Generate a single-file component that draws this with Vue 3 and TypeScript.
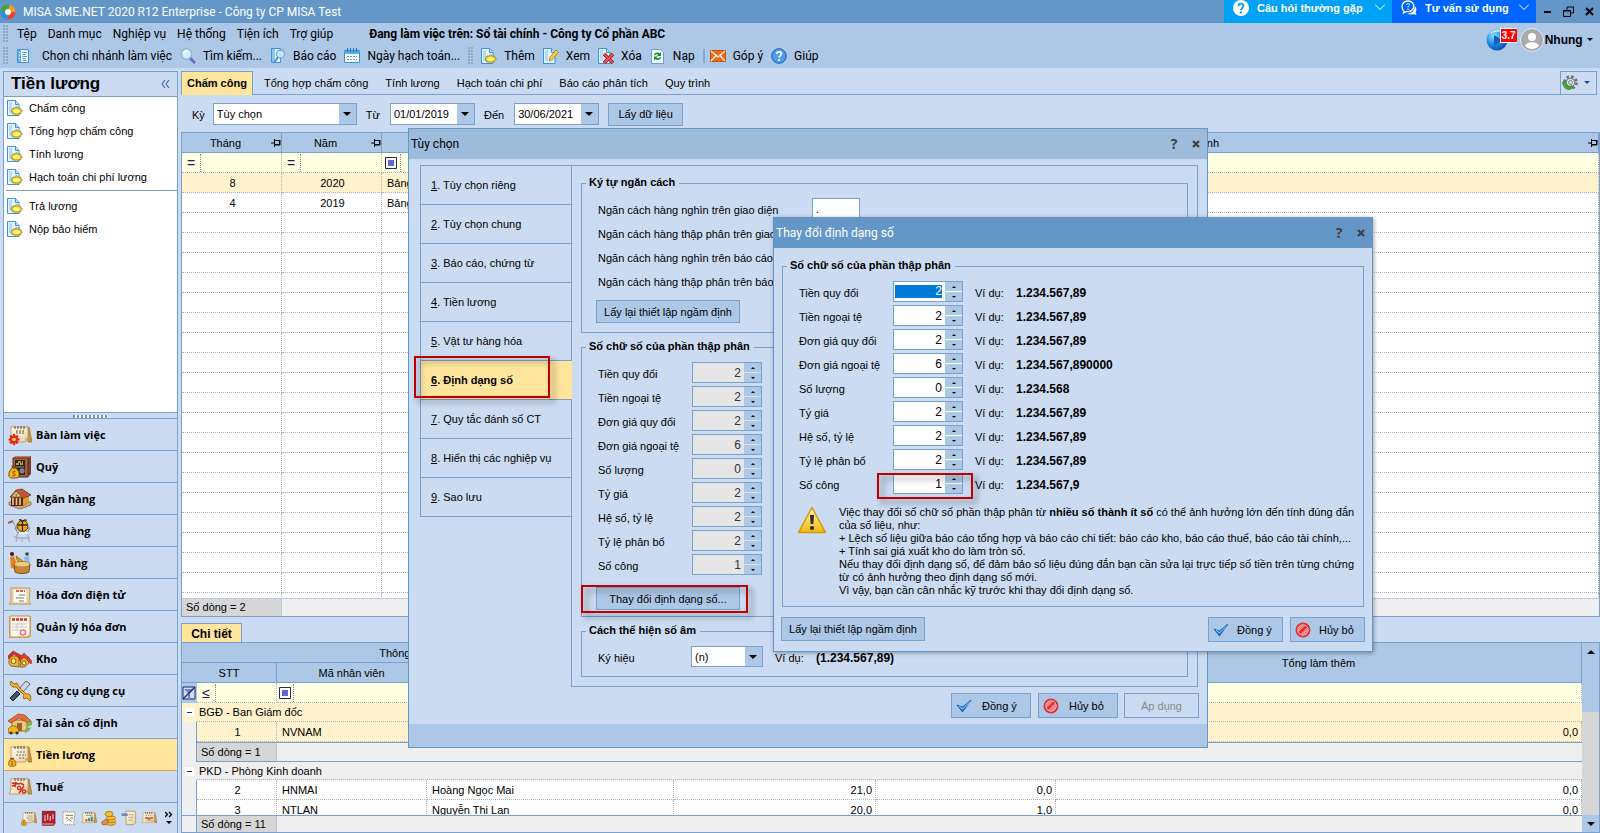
<script setup lang="ts">
import { ref } from 'vue'

interface Tool { icon: string; label: string }
interface NumberFormat { id: string; label: string; digits: number; sample: string }

const menus = ['Tệp', 'Danh mục', 'Nghiệp vụ', 'Hệ thống', 'Tiện ích', 'Trợ giúp']
const mainTools: Tool[] = [
  { icon: 'branch', label: 'Chọn chi nhánh làm việc' },
  { icon: 'search', label: 'Tìm kiếm...' },
  { icon: 'report', label: 'Báo cáo' },
  { icon: 'calendar', label: 'Ngày hạch toán...' },
]
const editTools: Tool[] = [
  { icon: 'docnew', label: 'Thêm' },
  { icon: 'docedit', label: 'Xem' },
  { icon: 'docdel', label: 'Xóa' },
  { icon: 'refresh', label: 'Nạp' },
]
const helpTools: Tool[] = [
  { icon: 'mail', label: 'Góp ý' },
  { icon: 'help', label: 'Giúp' },
]
const payrollLinks = ['Chấm công', 'Tổng hợp chấm công', 'Tính lương', 'Hạch toán chi phí lương']
const paymentLinks = ['Trả lương', 'Nộp bảo hiểm']
const modules: Tool[] = [
  { icon: 'desk', label: 'Bàn làm việc' },
  { icon: 'cash', label: 'Quỹ' },
  { icon: 'bank', label: 'Ngân hàng' },
  { icon: 'buy', label: 'Mua hàng' },
  { icon: 'sell', label: 'Bán hàng' },
  { icon: 'einvoice', label: 'Hóa đơn điện tử' },
  { icon: 'invoice', label: 'Quản lý hóa đơn' },
  { icon: 'stock', label: 'Kho' },
  { icon: 'tools', label: 'Công cụ dụng cụ' },
  { icon: 'asset', label: 'Tài sản cố định' },
  { icon: 'salary', label: 'Tiền lương' },
  { icon: 'tax', label: 'Thuế' },
]
const activeModule = ref('Tiền lương')
const moreModules: Tool[] = [
  { icon: 'salary', label: 'Giá thành' },
  { icon: 'redbook', label: 'Sổ cái' },
  { icon: 'contract', label: 'Hợp đồng' },
  { icon: 'budget', label: 'Ngân sách' },
  { icon: 'coins', label: 'Cổ đông' },
  { icon: 'scroll', label: 'Tổng hợp' },
  { icon: 'board', label: 'Báo cáo' },
]
const pages = ['Chấm công', 'Tổng hợp chấm công', 'Tính lương', 'Hạch toán chi phí', 'Báo cáo phân tích', 'Quy trình']
const activePage = ref('Chấm công')

const period = ref('Tùy chọn')
const fromDate = ref('01/01/2019')
const toDate = ref('30/06/2021')

const sheets = [
  { month: 8, year: 2020, name: 'Bảng chấm công tháng 8' },
  { month: 4, year: 2019, name: 'Bảng chấm công tháng 4' },
]
const emptyRows = 20

const optionTabs = [
  'Tùy chọn riêng', 'Tùy chọn chung', 'Báo cáo, chứng từ', 'Tiền lương', 'Vật tư hàng hóa',
  'Định dạng số', 'Quy tắc đánh số CT', 'Hiển thị các nghiệp vụ', 'Sao lưu',
]
const activeOption = ref(5)
const separators = ref([
  { label: 'Ngăn cách hàng nghìn trên giao diện', value: '.' },
  { label: 'Ngăn cách hàng thập phân trên giao diện', value: ',' },
  { label: 'Ngăn cách hàng nghìn trên báo cáo', value: '.' },
  { label: 'Ngăn cách hàng thập phân trên báo cáo', value: ',' },
])
const formats = ref<NumberFormat[]>([
  { id: 'amount', label: 'Tiền quy đổi', digits: 2, sample: '1.234.567,89' },
  { id: 'foreign', label: 'Tiền ngoại tệ', digits: 2, sample: '1.234.567,89' },
  { id: 'price', label: 'Đơn giá quy đổi', digits: 2, sample: '1.234.567,89' },
  { id: 'fprice', label: 'Đơn giá ngoại tệ', digits: 6, sample: '1.234.567,890000' },
  { id: 'qty', label: 'Số lượng', digits: 0, sample: '1.234.568' },
  { id: 'rate', label: 'Tỷ giá', digits: 2, sample: '1.234.567,89' },
  { id: 'ratio', label: 'Hệ số, tỷ lệ', digits: 2, sample: '1.234.567,89' },
  { id: 'alloc', label: 'Tỷ lệ phân bổ', digits: 2, sample: '1.234.567,89' },
  { id: 'work', label: 'Số công', digits: 1, sample: '1.234.567,9' },
])
const negative = ref('(n)')

function step(row: NumberFormat, by: number) {
  row.digits = Math.max(0, row.digits + by)
}
</script>

<template>
  <svg class="sprite" aria-hidden="true">
    <defs>
      <linearGradient id="gold" x1="0" y1="0" x2="0" y2="1"><stop offset="0" stop-color="#fff3b0" /><stop offset="1" stop-color="#f5b80c" /></linearGradient>
      <linearGradient id="paper" x1="0" y1="0" x2="1" y2="1"><stop offset="0" stop-color="#fffdf4" /><stop offset="1" stop-color="#e9d2a4" /></linearGradient>
      <radialGradient id="ball" cx=".35" cy=".3" r=".8"><stop offset="0" stop-color="#8fe3ff" /><stop offset=".5" stop-color="#1d8fe6" /><stop offset="1" stop-color="#0a3fa0" /></radialGradient>
    </defs>
    <symbol id="docbase" viewBox="0 0 16 16">
      <path d="M.5 .5h8l3.500 4v11h-11.500z" fill="#e8f5ff" stroke="#3a93dc" />
      <path d="M8.500 .5v4h3.500" fill="#b8def8" stroke="#3a93dc" /><path d="M2 2h3v11h-3z" fill="#b5dcf7" />
    </symbol>
    <symbol id="docnew" viewBox="0 0 16 16">
      <use href="#docbase" /><path d="M6 8h1.500l2-1.500 2 1.500h2l.5 1.500 1.500 1.500-1.500 1.500-.5 1.500h-2l-2 1.500-2-1.500h-2l-.5-1.500-1-1.500 1-1.500z" fill="#d9c02a" stroke="#9a8a2c" stroke-width=".8" /><ellipse cx="9.500" cy="11" rx="3.600" ry="2" fill="#fbf37a" />
    </symbol>
    <symbol id="docedit" viewBox="0 0 16 16"><use href="#docbase" /><path d="M6 13l1-4 6-7 2.500 2-6 7.500z" fill="#f6cf3d" stroke="#a87b12" stroke-width=".8" /></symbol>
    <symbol id="docdel" viewBox="0 0 16 16"><use href="#docbase" /><path d="M6 6l9 9M15 6l-9 9" stroke="#8d1515" stroke-width="3.500" /><path d="M6 6l9 9M15 6l-9 9" stroke="#f0514d" stroke-width="2" /></symbol>
    <symbol id="refresh" viewBox="0 0 16 16">
      <path d="M1.500 1.500h9l3 3v11h-12z" fill="#f4faff" stroke="#6d9fd0" /><path d="M4 7c1-3 4-3 5.500-1.500L11 4v4H7l1.300-1.200C7 6 5.800 6 5 7.500zM11 9.500c-1 3-4 3-5.500 1.500L4 12.500v-4h4L6.700 9.800c1.300 1 2.500.5 3.300-.8z" fill="#12912b" />
    </symbol>
    <symbol id="branch" viewBox="0 0 16 16"><path d="M.5 1.500h11v13h-11z" fill="#edf7ff" stroke="#3a93dc" /><path d="M1 2h3v12H1z" fill="#63b1e8" /><path d="M2 4.500h1M2 7.500h1M2 10.500h1" stroke="#fff" /><path d="M5.500 4.500h4.500M5.500 6.500h3M5.500 8.500h4.500M5.500 10.500h3M5.500 12.500h4" stroke="#4f9edb" /></symbol>
    <symbol id="search" viewBox="0 0 16 16"><path d="M10 10l5 5" stroke="#6b6fc4" stroke-width="3" /><circle cx="6.500" cy="6" r="5.200" fill="#d3efff" stroke="#8cb3d6" stroke-width="1.400" /><path d="M3.500 5.500c.5-2 2-2.500 3.500-2.500" stroke="#fff" stroke-width="1.500" fill="none" /></symbol>
    <symbol id="report" viewBox="0 0 16 16"><path d="M1.500 .5h9v14h-9z" fill="#edf7ff" stroke="#3a93dc" /><path d="M2 1h3v13H2z" fill="#8ac6ef" /><circle cx="10.500" cy="6" r="4" fill="#c5e6fb" stroke="#79a9d4" stroke-width="1.300" /><path d="M8 9l-4 6" stroke="#4b8fce" stroke-width="2" /></symbol>
    <symbol id="calendar" viewBox="0 0 16 16"><path d="M.5 2.500h15v12H.5z" fill="#f6fbff" stroke="#3a93dc" /><path d="M1 3h14v3H1z" fill="#56aee8" /><path d="M3.500 0v4M6.500 0v4M9.500 0v4M12.500 0v4" stroke="#2277b8" /><path d="M3 8.500h10M3 11.500h10" stroke="#5d9fd6" stroke-dasharray="2 1" /></symbol>
    <symbol id="mail" viewBox="0 0 16 16"><path d="M.5 2.500h15v11H.5z" fill="#f26a12" stroke="#c9500a" /><path d="M1 3l7 6 7-6M1 13l5-5.500M15 13l-5-5.500" stroke="#fff" fill="none" stroke-width="1.200" /></symbol>
    <symbol id="help" viewBox="0 0 16 16"><circle cx="8" cy="8" r="7.300" fill="#4e9be6" stroke="#1c5fae" /><path d="M5.700 6c0-3 4.700-3 4.700-.2 0 1.700-2.300 1.800-2.300 3.700" stroke="#fff" stroke-width="1.700" fill="none" /><circle cx="8.100" cy="12" r="1.100" fill="#fff" /></symbol>
    <symbol id="page" viewBox="0 0 24 24"><path d="M19 4h2l3 15h-4z" fill="#c9933f" stroke="#8f6426" stroke-width=".6" /><path d="M3 4h17v11l-3 4H1l2-4z" fill="url(#paper)" stroke="#b98d4a" stroke-width=".8" /><path d="M20 15l-3 4v-4z" fill="#d8b374" /><path d="M7 3v3M10 3v3M13 3v3M16 3v3" stroke="#5d4b33" /></symbol>
    <symbol id="bag" viewBox="0 0 24 24"><path d="M3 14l3-2 3 2c3 4 3 9-1 9H4c-4 0-4-5-1-9z" fill="#f3b617" stroke="#7b4a0c" /><path d="M3.500 11l2.500 2 2.500-2" fill="none" stroke="#7b4a0c" stroke-width="1.500" /><path d="M7.500 16.500c-3-1-3.500 1.500-1.500 2s1.500 3-1.500 1.800" fill="none" stroke="#8c3a00" /></symbol>
    <symbol id="desk" viewBox="0 0 24 24"><use href="#page" /><path d="M8 8h9M8 10h9" stroke="#555" stroke-dasharray="2 1" /><g stroke="#e3251b" stroke-width="2.600" stroke-linecap="round"><path d="M6 12v9M1.800 16.500h8.600M3 13.500l6 6M9 13.500l-6 6" /></g><circle cx="6" cy="16.500" r="1.800" fill="#ffd94a" /></symbol>
    <symbol id="cash" viewBox="0 0 24 24"><path d="M5 3l3-2h15v18l-3 3H5z" fill="#7d3f2a" /><path d="M5 3l3-2h15l-3 2z" fill="#c47c5a" /><path d="M5 3h15v19H5z" fill="#a65f43" stroke="#5a2c1c" /><path d="M7 5h10v15H7z" fill="#282420" /><path d="M8 9h8M10 7h5" stroke="#e8b92b" stroke-width="1.600" stroke-dasharray="3 1" /><path d="M8 12h8" stroke="#8c8c8c" /><circle cx="14" cy="16" r="2.200" fill="#777" stroke="#bbb" stroke-width=".6" /><use href="#bag" /></symbol>
    <symbol id="bank" viewBox="0 0 24 24"><path d="M1 18l11 4 11-4v-3H1z" fill="#d9a878" stroke="#754020" stroke-width=".6" /><path d="M3 10h12l6-3v8l-6 4H3z" fill="#4b2817" /><path d="M5 10v8M8.500 10v8M12 10v8" stroke="#e9b77e" stroke-width="1.800" /><path d="M15 10l6-4v9l-6 4z" fill="#e09c2b" /><path d="M2 10l6-7 6-1 9 6-7 3z" fill="#bd5b39" stroke="#6e2d18" stroke-width=".7" /><path d="M3 10l5-6 6 6z" fill="#e8c47a" stroke="#8a5322" /><circle cx="8.500" cy="7.800" r="1.400" fill="#6fa545" /></symbol>
    <symbol id="buy" viewBox="0 0 24 24"><path d="M0 4l5-2" stroke="#9c5a4c" stroke-width="2" /><path d="M5 2l3 8h13" stroke="#9aa6b5" stroke-width="1.200" fill="none" /><path d="M7 9h15l-3 5h-9z" fill="#c9d3df" stroke="#76859a" /><circle cx="14.500" cy="7" r="5.500" fill="#e9ab12" stroke="#5b3a05" /><path d="M14.500 2v10M9.500 6h10M11 1c2-1 3 1 3.500 2 1-2 3-3 4-1" stroke="#3c2206" stroke-width="1.300" fill="none" /><path d="M10 14l-2 5h13l-2-5M9 19l-1 4M20 19l2 4M6 17l3 3M14 19v4" stroke="#a3afbf" stroke-width="1.300" fill="none" /><path d="M11 14h9" stroke="#eef3f8" stroke-width="2" /></symbol>
    <symbol id="sell" viewBox="0 0 24 24"><circle cx="4" cy="3" r="2" fill="#3a1c12" /><path d="M2 6l4-1 2 6-1 7H3z" fill="#ec7d1c" /><path d="M4 17l2 6" stroke="#d9d9ef" stroke-width="2" /><circle cx="19" cy="3" r="1.800" fill="#37405c" /><path d="M16 6l5-1 1 8h-5z" fill="#8db9df" /><path d="M8 5l3 2 5 4-6 1z" fill="#d3a810" stroke="#6c4d08" stroke-width=".6" /><path d="M6 13c3-3 13-3 16 0l-1 8c-3 2-11 2-14 0z" fill="#c48637" stroke="#845015" /><ellipse cx="14" cy="13" rx="7.500" ry="2.300" fill="#f0ca7f" /></symbol>
    <symbol id="einvoice" viewBox="0 0 24 24"><path d="M3 5h19l-1 14 2 2H1l2-2z" fill="#f6e2b8" stroke="#bd9555" /><path d="M5 6h14v14H5z" fill="#fffdf6" stroke="#d2b27a" stroke-width=".7" /><path d="M8 8h9" stroke="#d8271f" stroke-width="1.600" stroke-dasharray="3 1" /><path d="M11 12h6M8 15h8M11 18h5" stroke="#777" /></symbol>
    <symbol id="invoice" viewBox="0 0 24 24"><path d="M1 1h22v20l-2 2H1z" fill="#d7aa64" /><path d="M2 1h20v19l-3 2H2z" fill="#fff9ec" stroke="#c58f3e" /><path d="M4 4.500h15" stroke="#de2d28" stroke-width="2.500" stroke-dasharray="3 1" /><path d="M4 9h15M4 12h15M4 15h9M9 8v8M14 8v5" stroke="#c6c9d0" /><circle cx="15" cy="17.500" r="2.600" fill="none" stroke="#db6d87" stroke-width="1.400" /></symbol>
    <symbol id="stock" viewBox="0 0 24 24"><path d="M1 9h10v11l-8-1-2-2zM13 10h8v6l-4 4h-5z" fill="#eab52b" stroke="#7b3d0e" stroke-width=".7" /><path d="M0 9l5-5 9 5-2 3-6-5-5 5z" fill="#d32f23" stroke="#7b1610" stroke-width=".5" /><path d="M11 11l5-5 8 8-1 3-7-7-4 4z" fill="#de4033" stroke="#7b1610" stroke-width=".5" /><circle cx="5.500" cy="14" r="2.500" fill="#fff08a" stroke="#8a5a10" /><circle cx="16" cy="16" r="2" fill="#fff08a" stroke="#8a5a10" /></symbol>
    <symbol id="tools" viewBox="0 0 24 24"><path d="M18 2l4 3-8 9-4-3z" fill="#cfd8e2" stroke="#5c6875" /><path d="M9 12l3 3-7 7-3-3z" fill="#4b5560" stroke="#222" /><path d="M3 2l3 3 3-1 2 4 7 7c5-1 6 4 4 7l-3-3-3 1c-1-1-1-3 0-4l-8-8C3 9 1 5 3 2z" fill="#ecae2c" stroke="#8c5a0c" stroke-width=".8" /></symbol>
    <symbol id="asset" viewBox="0 0 24 24"><path d="M4 9h15v11H4z" fill="#f1c879" stroke="#a56a23" /><path d="M0 10l10-7 7 1 6 6-3 2-9-5-8 5z" fill="#e46f3c" stroke="#8a2f1b" stroke-width=".6" /><path d="M9 12h5v8H9z" fill="#a45e2d" /><path d="M0 18l3-3h5l3 4-1 3H0z" fill="#f0b51b" stroke="#6d4a08" stroke-width=".6" /><circle cx="3" cy="22" r="1.500" fill="#333" /><circle cx="9" cy="22" r="1.500" fill="#333" /><path d="M18 12l6-2v4l-5 2M17 18l6-2-2 4-4 2z" fill="#74b549" /></symbol>
    <symbol id="salary" viewBox="0 0 24 24"><use href="#page" /><path d="M9 9h9M8 12h10M11 15h6" stroke="#666" stroke-dasharray="2 1" /><use href="#bag" x="0" y="7" width="17" height="17" /></symbol>
    <symbol id="tax" viewBox="0 0 24 24"><use href="#page" /><path d="M4 8l8 1M8 7l-1 5M4 11l3-1M12 8l4 2" stroke="#d8271f" stroke-width="1.600" /><path d="M16 11l-5 7" stroke="#d8271f" stroke-width="1.500" /><circle cx="11" cy="13" r="1.600" fill="none" stroke="#d8271f" stroke-width="1.300" /><circle cx="16" cy="16.500" r="1.600" fill="none" stroke="#d8271f" stroke-width="1.300" /></symbol>
    <symbol id="redbook" viewBox="0 0 24 24"><path d="M2 2h19v18l-2 3H2z" fill="#b01f2c" stroke="#640e17" /><path d="M6 8v9M10 6v9M14 9v7M18 6v8" stroke="#f3c2c4" stroke-width="1.800" /><path d="M2 21h17" stroke="#fff" /></symbol>
    <symbol id="contract" viewBox="0 0 24 24"><path d="M3 3h18l-2 16 2 3H5l-2-3z" fill="#fffaf0" stroke="#777" stroke-dasharray="2 1" /><path d="M7 8h11M7 12h4M14 12h4M9 17l3-3 4 3" stroke="#8a7b65" stroke-width="1.500" fill="none" /></symbol>
    <symbol id="budget" viewBox="0 0 24 24"><use href="#page" /><path d="M8 17v-3" stroke="#e23b2a" stroke-width="3" /><path d="M12 17v-5" stroke="#37a544" stroke-width="3" /><path d="M16 17v-7" stroke="#2a7ad4" stroke-width="3" /><path d="M7 8h10" stroke="#666" /></symbol>
    <symbol id="coins" viewBox="0 0 24 24"><g fill="#f2bd33" stroke="#9c6a10"><ellipse cx="15" cy="20" rx="7" ry="3" /><ellipse cx="15" cy="16" rx="7" ry="3" /><ellipse cx="15" cy="12" rx="7" ry="3" /><ellipse cx="12" cy="6" rx="6" ry="4" /></g><path d="M1 18l6-4 5 3-4 5H2z" fill="#e58c4b" stroke="#96501d" /></symbol>
    <symbol id="scroll" viewBox="0 0 24 24"><path d="M7 2h14l1 3v14l-3 3H8z" fill="url(#paper)" stroke="#a58047" /><path d="M1 5h9v4H1z" fill="#7381c9" /><path d="M11 7h8M11 11h8M11 15h6" stroke="#9a8c74" /></symbol>
    <symbol id="board" viewBox="0 0 24 24"><use href="#page" /><path d="M6 12h4l2 2 2-2h4" stroke="#cc4c1c" stroke-width="2" fill="none" /><path d="M7 8h10M8 16h9" stroke="#666" stroke-dasharray="2 1" /></symbol>
    <symbol id="pin" viewBox="0 0 10 8"><path d="M0 4h3M3.500 0v8M3.500 1.500h5v4h-5M3.500 6h5.500M9 1v5" stroke="#000" fill="none" /></symbol>
    <symbol id="box" viewBox="0 0 12 12"><path d="M.5 .5h11v11H.5z" fill="#fff" stroke="#26265e" /><path d="M3 3h6v6H3z" fill="#6464d2" /></symbol>
    <symbol id="ok" viewBox="0 0 16 16"><path d="M1 7l5.500 7L15 2 6.500 9z" fill="#1976dc" stroke="#0c56b0" stroke-width=".8" /><path d="M3 8l3.500 3L13 4.500" stroke="#a5dbff" fill="none" /></symbol>
    <symbol id="cancel" viewBox="0 0 16 16"><circle cx="8" cy="8" r="7.500" fill="#e03038" /><circle cx="8" cy="8" r="4.600" fill="#f08a88" /><path d="M4 11.500L11.500 4" stroke="#e03038" stroke-width="2.500" /><circle cx="8" cy="8" r="5.200" fill="none" stroke="#fad4d2" stroke-width=".9" /></symbol>
    <symbol id="close" viewBox="0 0 8 8"><path d="M1 1l6 6M7 1l-6 6" stroke="currentColor" stroke-width="2.200" /></symbol>
  </svg>

  <div class="app">
    <header class="titlebar">
      <svg class="logo" viewBox="0 0 16 16">
        <circle cx="8" cy="8" r="5" fill="none" stroke="#e8432c" stroke-width="5" stroke-dasharray="8 24" stroke-dashoffset="0" />
        <circle cx="8" cy="8" r="5" fill="none" stroke="#2c8fd8" stroke-width="5" stroke-dasharray="8 24" stroke-dashoffset="-8" />
        <circle cx="8" cy="8" r="5" fill="none" stroke="#43a43a" stroke-width="5" stroke-dasharray="8 24" stroke-dashoffset="-16" />
        <circle cx="8" cy="8" r="5" fill="none" stroke="#f59a23" stroke-width="5" stroke-dasharray="8 24" stroke-dashoffset="-24" />
        <circle cx="8" cy="8" r="3" fill="#fff" />
      </svg>
      <h1>MISA SME.NET 2020 R12 Enterprise - Công ty CP MISA Test</h1>
      <button class="promo faq">
        <svg class="i16" viewBox="0 0 16 16"><circle cx="8" cy="8" r="8" fill="#fff" /><path d="M5.500 6.200c0-3.400 5-3.200 5-.3C10.500 7.700 8 8 8 10" stroke="#00a2f5" stroke-width="1.800" fill="none" /><circle cx="8" cy="12.400" r="1.100" fill="#00a2f5" /></svg>
        <span>Câu hỏi thường gặp</span>
        <svg class="chev" viewBox="0 0 10 6"><path d="M0 .5l5 5 5-5" stroke="#fff" fill="none" /></svg>
      </button>
      <button class="promo advice">
        <svg class="i16" viewBox="0 0 16 16"><path d="M3 11.500C-1 7 1.500 1 7 1s7.500 6 4 9c-2 2-4 1.800-5.500 1.500L2.500 13z" fill="none" stroke="#fff" stroke-width="1.300" /><path d="M14 6c2 3 1.500 5 .5 6.500l1 2.500-3-1c-2 1-5 .5-6-.5 4 0 7-2.500 7.500-7.500z" fill="#fff" /><path d="M5.500 5c0-2 3-2 3 0 0 1-1.500 1-1.500 2.500M7 8.500V10" stroke="#fff" fill="none" /></svg>
        <span>Tư vấn sử dụng</span>
        <svg class="chev" viewBox="0 0 10 6"><path d="M0 .5l5 5 5-5" stroke="#fff" fill="none" /></svg>
      </button>
      <div class="winbtns">
        <button aria-label="Thu nhỏ"><svg viewBox="0 0 11 11"><path d="M2 6h7" stroke="#000" stroke-width="2" /></svg></button>
        <button aria-label="Khôi phục"><svg viewBox="0 0 11 11"><path d="M4 1h7M4 1v3M10.500 1v6h-3M.5 4.500h7v6h-7zM0 5h8" stroke="#000" fill="none" /></svg></button>
        <button aria-label="Đóng"><svg viewBox="0 0 11 11"><path d="M2 2l7 7M9 2l-7 7" stroke="#000" stroke-width="2" /></svg></button>
      </div>
    </header>

    <div class="topbars">
      <div class="bars">
        <nav class="menubar">
          <i class="grip" />
          <button v-for="m in menus" :key="m">{{ m }}</button>
          <strong>Đang làm việc trên: Sổ tài chính - Công ty Cổ phần ABC</strong>
        </nav>
        <div class="toolbar">
          <i class="grip" />
          <button v-for="t in mainTools" :key="t.label"><svg class="i16"><use :href="'#' + t.icon" /></svg>{{ t.label }}</button>
          <i class="grip mid" />
          <button v-for="t in editTools" :key="t.label"><svg class="i16"><use :href="'#' + t.icon" /></svg>{{ t.label }}</button>
          <i class="sep" />
          <button v-for="t in helpTools" :key="t.label"><svg class="i16"><use :href="'#' + t.icon" /></svg>{{ t.label }}</button>
        </div>
      </div>
      <div class="account">
        <div class="globe">
          <svg viewBox="0 0 22 22"><circle cx="11" cy="11" r="10.500" fill="url(#ball)" /><path d="M8 6l8 5-8 6z" fill="#1560b4" /><path d="M3 5c4-5 11-5 14-2-5-1-9 0-14 2z" fill="#c9f2ff" /></svg>
          <span class="version">3.7</span>
        </div>
        <svg class="avatar" viewBox="0 0 24 24"><circle cx="12" cy="12" r="11.500" fill="#a9aaad" stroke="#e6eaf0" /><circle cx="12" cy="9" r="4" fill="#fff" /><path d="M5 18c1-5 13-5 14 0-4 4-10 4-14 0z" fill="#fff" /></svg>
        <button class="user">Nhung <i class="caret small" /></button>
      </div>
    </div>

    <div class="work">
      <aside class="side">
        <div class="sidehead"><h2>Tiền lương</h2><button aria-label="Thu gọn"><svg viewBox="0 0 9 8"><path d="M4 0L1 4l3 4M8 0L5 4l3 4" stroke="#4a6fb0" fill="none" stroke-width="1.200" /></svg></button></div>
        <nav class="links">
          <a v-for="l in payrollLinks" :key="l" href="#"><svg class="i16"><use href="#docnew" /></svg>{{ l }}</a>
          <hr />
          <a v-for="l in paymentLinks" :key="l" href="#"><svg class="i16"><use href="#docnew" /></svg>{{ l }}</a>
        </nav>
        <div class="splitter"><i /></div>
        <nav class="modules">
          <button v-for="m in modules" :key="m.label" :class="{ on: m.label === activeModule }" @click="activeModule = m.label">
            <svg><use :href="'#' + m.icon" /></svg>{{ m.label }}
          </button>
        </nav>
        <div class="more">
          <button v-for="m in moreModules" :key="m.label" :aria-label="m.label"><svg><use :href="'#' + m.icon" /></svg></button>
          <button class="expand" aria-label="Thêm phân hệ"><svg viewBox="0 0 8 14"><path d="M0 1l2.500 2.500L0 6M4 1l2.500 2.500L4 6" stroke="#000" fill="none" stroke-width="1.300" /><path d="M1 10h6l-3 3z" /></svg></button>
        </div>
      </aside>

      <main class="main">
        <div class="pagetabs">
          <button v-for="p in pages" :key="p" :class="{ on: p === activePage }" @click="activePage = p">{{ p }}</button>
          <button class="gear" aria-label="Thiết lập">
            <svg viewBox="0 0 16 16"><circle cx="8.500" cy="7.500" r="6" fill="none" stroke="#6d6f73" stroke-width="2.500" stroke-dasharray="2.500 2.200" /><circle cx="8.500" cy="7.500" r="4.200" fill="#e9e9ea" stroke="#7f8286" stroke-width="1.200" /><circle cx="8.500" cy="7.500" r="2" fill="#cbdbf1" stroke="#7f8286" /><path d="M0 8l2-2 2.500 2.500H3c1 2.500 4 3.500 6.500 2l1 2.500C6 16 1.500 13.500 1 8.500z" fill="#43b02a" stroke="#1f7a12" stroke-width=".6" /></svg>
            <i class="caret small blue" />
          </button>
        </div>
        <form class="filters" @submit.prevent>
          <label for="period">Kỳ</label>
          <span class="combo period"><select id="period" v-model="period"><option>Tùy chọn</option></select></span>
          <label for="from">Từ</label>
          <span class="combo date"><input id="from" v-model="fromDate" /></span>
          <label for="to">Đến</label>
          <span class="combo date"><input id="to" v-model="toDate" /></span>
          <button class="btn">Lấy dữ liệu</button>
        </form>

        <section class="master">
          <div class="clip">
            <table>
              <colgroup><col class="c-month" /><col class="c-year" /><col class="c-name" /><col /></colgroup>
              <thead>
                <tr><th v-for="h in ['Tháng', 'Năm', 'Tên bảng chấm công', 'Chi nhánh']" :key="h">{{ h }}<svg class="pin"><use href="#pin" /></svg></th></tr>
              </thead>
              <tbody>
                <tr class="filter">
                  <td><span class="op">=</span></td><td><span class="op">=</span></td>
                  <td><span class="op"><svg class="boxi"><use href="#box" /></svg></span></td><td />
                </tr>
                <tr v-for="(s, i) in sheets" :key="s.year" :class="{ sel: i === 0 }"><td class="c">{{ s.month }}</td><td class="c">{{ s.year }}</td><td>{{ s.name }}</td><td /></tr>
                <tr v-for="n in emptyRows" :key="'e' + n"><td /><td /><td /><td /></tr>
              </tbody>
            </table>
          </div>
          <div class="total"><span>Số dòng = 2</span></div>
        </section>

        <section class="detail">
          <div class="detailtabs"><button>Chi tiết</button></div>
          <div class="detailbody">
            <div class="dgrid">
              <div class="clip">
                <table>
                  <colgroup><col class="d-in" /><col class="d-stt" /><col class="d-code" /><col class="d-name" /><col class="d-work" /><col class="d-off" /><col /></colgroup>
                  <thead>
                    <tr><th colspan="4">Thông tin nhân viên</th><th rowspan="2">Số công</th><th rowspan="2">Nghỉ phép</th><th rowspan="2">Tổng làm thêm</th></tr>
                    <tr><th colspan="2">STT</th><th>Mã nhân viên</th><th>Tên nhân viên</th></tr>
                  </thead>
                  <tbody>
                    <tr class="filter">
                      <td class="funnel"><svg viewBox="0 0 14 14"><path d="M1 1h12v12H1z" fill="#cfdcf3" stroke="#1d2a70" /><path d="M2 3h10L8 7v5H6V7z" fill="#6e83cf" /><path d="M1 13L13 1" stroke="#1d2a70" stroke-width="1.300" /></svg></td>
                      <td><span class="op">≤</span></td>
                      <td><span class="op near"><svg class="boxi"><use href="#box" /></svg></span></td><td /><td /><td /><td />
                    </tr>
                    <tr class="group sel"><td><i class="fold" /></td><td colspan="6">BGĐ - Ban Giám đốc</td></tr>
                    <tr class="sel"><td class="indent" /><td class="c">1</td><td>NVNAM</td><td>Nguyễn Văn Nam</td><td class="r">22,0</td><td class="r">0,0</td><td class="r">0,0</td></tr>
                    <tr class="sum"><td class="indent" /><td class="cell">Số dòng = 1</td><td colspan="5" /></tr>
                    <tr class="group"><td><i class="fold" /></td><td colspan="6">PKD - Phòng Kinh doanh</td></tr>
                    <tr><td class="indent" /><td class="c">2</td><td>HNMAI</td><td>Hoàng Ngọc Mai</td><td class="r">21,0</td><td class="r">0,0</td><td class="r">0,0</td></tr>
                    <tr><td class="indent" /><td class="c">3</td><td>NTLAN</td><td>Nguyễn Thị Lan</td><td class="r">20,0</td><td class="r">1,0</td><td class="r">0,0</td></tr>
                  </tbody>
                </table>
              </div>
              <div class="total"><i /><span>Số dòng = 11</span></div>
            </div>
            <div class="scroll"><button aria-label="Cuộn lên"><i class="tri up" /></button><span class="thumb" /><button aria-label="Cuộn xuống"><i class="tri" /></button></div>
          </div>
        </section>
      </main>
    </div>

    <section class="dialog options" role="dialog" aria-labelledby="dlg1">
      <header><h3 id="dlg1">Tùy chọn</h3><button aria-label="Trợ giúp">?</button><button aria-label="Đóng"><svg><use href="#close" /></svg></button></header>
      <div class="dbody">
        <div class="optrow">
          <nav class="opttabs">
            <button v-for="(t, i) in optionTabs" :key="t" :class="{ on: i === activeOption }" @click="activeOption = i"><u>{{ i + 1 }}</u>. {{ t }}<i v-if="i === activeOption" class="mark m1" /></button>
          </nav>
          <div class="panel">
            <fieldset class="g1">
              <legend>Ký tự ngăn cách</legend>
              <div v-for="(s, i) in separators" :key="s.label" class="line"><label :for="'sep' + i" class="wide">{{ s.label }}</label><input :id="'sep' + i" v-model="s.value" class="ch" /></div>
              <button class="btn std">Lấy lại thiết lập ngầm định</button>
            </fieldset>
            <fieldset class="g2">
              <legend>Số chữ số của phần thập phân</legend>
              <div v-for="f in formats" :key="f.id" class="line">
                <label :for="'cur-' + f.id">{{ f.label }}</label>
                <span class="spin off"><input :id="'cur-' + f.id" :value="f.digits" disabled /><span class="ud"><button disabled aria-label="Tăng"><i class="tick up" /></button><button disabled aria-label="Giảm"><i class="tick" /></button></span></span>
              </div>
              <button class="btn std change">Thay đổi định dạng số...<i class="mark m2" /></button>
            </fieldset>
            <fieldset class="g3">
              <legend>Cách thể hiện số âm</legend>
              <div class="line"><label for="neg">Ký hiệu</label><span class="combo neg"><select id="neg" v-model="negative"><option>(n)</option><option>-n</option></select></span><span class="eg">Ví dụ:</span><b>(1.234.567,89)</b></div>
            </fieldset>
          </div>
        </div>
        <div class="actions">
          <button class="btn ic"><svg class="i16"><use href="#ok" /></svg>Đồng ý</button>
          <button class="btn ic"><svg class="i16"><use href="#cancel" /></svg>Hủy bỏ</button>
          <button class="btn apply" disabled>Áp dụng</button>
        </div>
      </div>
      <footer />
    </section>

    <section class="dialog numbers" role="dialog" aria-labelledby="dlg2">
      <header><h3 id="dlg2">Thay đổi định dạng số</h3><button aria-label="Trợ giúp">?</button><button aria-label="Đóng"><svg><use href="#close" /></svg></button></header>
      <div class="nbody">
        <fieldset>
          <legend>Số chữ số của phần thập phân</legend>
          <div v-for="(f, i) in formats" :key="f.id" class="line">
            <label :for="'new-' + f.id">{{ f.label }}</label>
            <span class="spin" :class="{ focus: i === 0 }"><input :id="'new-' + f.id" v-model.number="f.digits" /><span class="ud"><button aria-label="Tăng" @click="step(f, 1)"><i class="tick up" /></button><button aria-label="Giảm" @click="step(f, -1)"><i class="tick" /></button></span><i v-if="f.id === 'work'" class="mark m3" /></span>
            <span class="eg">Ví dụ:</span><b>{{ f.sample }}</b>
          </div>
          <div class="warn">
            <svg viewBox="0 0 30 28"><path d="M15 1.500L1.500 26.500h27z" fill="url(#gold)" stroke="#d29a10" stroke-width="1.500" stroke-linejoin="round" /><path d="M13 9h4l-.7 9h-2.600z" fill="#2b2b33" /><circle cx="15" cy="22" r="2.100" fill="#2b2b33" /></svg>
            <p>
              Việc thay đổi số chữ số phần thập phân từ <strong>nhiều số thành ít số</strong> có thể ảnh hưởng lớn đến tính đúng đắn<br />của số liệu, như:<br />+ Lệch số liệu giữa báo cáo tổng hợp và báo cáo chi tiết: báo cáo kho, báo cáo thuế, báo cáo tài chính,...<br />+ Tính sai giá xuất kho do làm tròn số.<br />Nếu thay đổi định dạng số, để đảm bảo số liệu đúng đắn bạn cần sửa lại trực tiếp số tiền trên từng chứng<br />từ có ảnh hưởng theo định dạng số mới.<br />Vì vậy, bạn cần cân nhắc kỹ trước khi thay đổi định dạng số.
            </p>
          </div>
        </fieldset>
        <div class="actions split">
          <button class="btn std">Lấy lại thiết lập ngầm định</button>
          <button class="btn ic"><svg class="i16"><use href="#ok" /></svg>Đồng ý</button>
          <button class="btn ic"><svg class="i16"><use href="#cancel" /></svg>Hủy bỏ</button>
        </div>
      </div>
    </section>
  </div>
</template>

<style>
body { margin: 0; }
</style>

<style scoped>
* { box-sizing: border-box; }
.app {
  --line: #7aa0ce; --pale: #cbdbf1; --mid: #adc7e6; --deep: #6496c8; --sun: #ffe69c;
  --ui: "Open Sans", "Noto Sans", sans-serif;
  --bar: Roboto, "Open Sans", sans-serif;
  position: relative; display: flex; flex-direction: column; height: 100vh; overflow: hidden;
  background: var(--pale); color: #000; font: 11px/14px "Liberation Sans", Arial, sans-serif; white-space: nowrap;
}
.sprite { position: absolute; width: 0; height: 0; }
button { margin: 0; padding: 0; border: 0; background: none; color: inherit; font: inherit; white-space: nowrap; }
input, select { font: inherit; color: #000; border-radius: 0; margin: 0; outline: 0; }
h1, h2, h3, p { margin: 0; }
svg { display: block; flex: none; }
.i16 { width: 16px; height: 16px; }
.caret { display: inline-block; width: 0; height: 0; border: 4px solid transparent; border-top-color: #000; border-bottom: 0; }
.caret.small { border-width: 3px; border-bottom: 0; }
.caret.blue { border-top-color: #1c479a; }

.titlebar { display: flex; align-items: center; flex: none; height: 23px; background: var(--deep); color: #fff; }
.logo { width: 16px; height: 16px; }
.titlebar h1 { flex: 1; margin-left: 7px; font: 12px/20px var(--bar); }
.promo { display: flex; align-items: flex-start; height: 23px; padding-left: 9px; font-weight: 700; font-size: 11px; line-height: 16px; }
.promo span { flex: 1; text-align: left; margin-left: 8px; }
.promo .chev { width: 10px; height: 6px; margin: 4px 7px 0 0; }
.faq { width: 168px; background: #00a2f5; }
.advice { width: 144px; background: #0066ff; }
.winbtns { display: flex; width: 64px; justify-content: space-between; padding: 0 5px 0 6px; }
.winbtns svg { width: 11px; height: 11px; }

.topbars { display: flex; justify-content: space-between; flex: none; height: 45px; background: var(--mid); }
.menubar, .toolbar { display: flex; align-items: center; height: 22px; font: 12px/16px var(--bar); }
.grip { width: 5px; height: 18px; margin: 0 9px 0 3px; background: radial-gradient(circle at 1px 1px, #8fa6c3 1px, transparent 1px) 0 0 / 3px 3px; }
.menubar button { margin-right: 11px; }
.menubar strong { margin-left: 25px; font-weight: 700; }
.toolbar button { display: flex; align-items: center; margin-right: 8px; gap: 7px; }
.toolbar button:first-of-type { gap: 9px; }
.grip.mid { margin-left: 0; margin-right: 8px; }
.sep { width: 2px; height: 14px; margin: 0 5px 0 0; background: #7fa9d6; }
.account { display: flex; align-items: center; padding: 0 7px 11px 0; }
.globe { display: flex; width: 34px; }
.globe svg { width: 22px; height: 22px; }
.version { width: 17px; height: 15px; margin: -1px 0 0 -8px; padding-left: 1px; overflow: hidden; background: #f00; border: 1px solid #fff; border-right: 0; color: #fff; font-size: 10px; font-weight: 700; line-height: 13px; z-index: 1; }
.avatar { width: 24px; height: 24px; }
.user { margin-left: 1px; font-weight: 700; font-size: 12px; }
.user .caret { margin: 0 0 3px 1px; }

.work { display: flex; flex: 1; min-height: 0; padding-left: 3px; gap: 3px; }
.side { display: flex; flex-direction: column; flex: none; width: 175px; margin-top: 3px; border: 1px solid var(--line); border-bottom: 0; }
.sidehead { display: flex; align-items: center; justify-content: space-between; height: 25px; padding: 0 7px; border-bottom: 1px solid var(--line); }
.sidehead h2 { font-size: 17px; line-height: 24px; }
.sidehead svg { width: 9px; height: 8px; }
.links { flex: 1; background: #fff; overflow: hidden; }
.links a { display: flex; align-items: center; gap: 6px; height: 23px; padding: 0 0 2px 3px; color: #000; text-decoration: none; }
.links hr { height: 1px; margin: 1px 0 4px 2px; border: 0; background: var(--line); }
.splitter { height: 7px; padding: 2px 0; border: solid var(--line); border-width: 1px 0; }
.splitter i { display: block; width: 35px; height: 3px; margin: 0 auto; background: repeating-linear-gradient(90deg, #6b95cb 0 2px, #fff 2px 4px); }
.modules button { display: flex; align-items: center; width: 100%; height: 32px; padding-left: 4px; gap: 4px; border-bottom: 1px solid var(--line); font: 700 11px/16px var(--ui); }
.modules button.on { background: var(--sun); border-color: #ff9440; }
.modules svg { width: 24px; height: 24px; }
.more { display: flex; align-items: center; height: 30px; padding-left: 17px; gap: 4px; }
.more svg { width: 16px; height: 16px; }
.more .expand { margin-left: 4px; }
.more .expand svg { width: 8px; height: 14px; }

.main { display: flex; flex-direction: column; flex: 1; min-width: 0; }
.pagetabs { display: flex; align-items: center; height: 24px; margin: 3px 3px 0 0; border-bottom: 1px solid var(--line); }
.pagetabs button { height: 24px; margin-right: 7px; padding: 0 5px; }
.pagetabs button.on { margin-right: 6px; background: var(--sun); border: 1px solid var(--line); border-bottom: 0; font-weight: 700; }
.pagetabs .gear { display: flex; align-items: center; gap: 6px; width: 37px; margin: 0 0 0 auto; padding: 0 0 0 1px; border: 1px solid var(--line); }
.gear svg { width: 16px; height: 16px; }
.filters { display: flex; align-items: center; height: 37px; padding: 1px 0 0 11px; }
.filters label { padding-top: 2px; }
.combo { position: relative; display: block; height: 22px; border: 1px solid var(--line); background: #fff; }
.combo::before { content: ""; position: absolute; right: 0; top: 0; bottom: 0; width: 17px; background: var(--mid); pointer-events: none; }
.combo::after { content: ""; position: absolute; right: 5px; top: 8px; border: 4px solid transparent; border-top-color: #000; border-bottom: 0; pointer-events: none; }
.combo select, .combo input { display: block; width: 100%; height: 19px; padding: 0 18px 0 3px; border: 0; background: none; appearance: none; }
.combo.period { width: 144px; margin: 0 9px 0 8px; }
.combo.date { width: 85px; margin: 0 9px 0 10px; }
.btn { display: flex; align-items: center; justify-content: center; height: 23px; background: var(--mid); border: 1px solid var(--line); }
.filters .btn { width: 75px; }

table { width: 100%; table-layout: fixed; border-spacing: 0; border-collapse: separate; }
th { position: relative; height: 20px; padding: 0; background: var(--mid); border: solid var(--line); border-width: 0 1px 1px 0; font-weight: 400; text-align: center; }
td { height: 20px; padding: 0 3px 0 5px; border: dotted #b4b4b4; border-width: 0 1px 1px 0; overflow: hidden; }
td.c { text-align: center; }
td.r { text-align: right; }
tr.sel td { background: #fff2cc; }
tr.filter td { padding: 0; background: #ffffe1; }
.op { display: flex; align-items: center; justify-content: center; width: 19px; height: 18px; border-right: 1px dotted #888; color: #1d1d5c; font-size: 14px; }
.op.near { width: 17px; }
.boxi { width: 12px; height: 12px; }
.pin { position: absolute; right: 0; top: 6px; width: 10px; height: 8px; }
.clip { flex: 1; min-height: 0; overflow: hidden; background: #fff; }
.master { display: flex; flex-direction: column; flex: 1; min-height: 0; border: 1px solid var(--line); }
.master th { padding-right: 12px; }
.c-month { width: 100px; } .c-year { width: 100px; } .c-name { width: 420px; }
.total { display: flex; flex: none; height: 18px; background: #efefef; border-top: 1px solid #b3c7df; line-height: 17px; }
.total span { width: 100px; padding-left: 4px; background: #d6d6d6; border-right: 1px solid #b3c7df; }

.detail { display: flex; flex-direction: column; flex: none; height: 216px; padding-top: 6px; }
.detailtabs { height: 19px; }
.detailtabs button { width: 61px; height: 20px; background: var(--sun); border: 1px solid var(--line); border-bottom: 0; font-size: 12px; font-weight: 700; }
.detailbody { display: flex; flex: 1; min-height: 0; border: 1px solid var(--line); }
.dgrid { display: flex; flex-direction: column; flex: 1; min-width: 0; }
.d-in { width: 15px; } .d-stt { width: 80px; } .d-code { width: 150px; } .d-name { width: 247px; } .d-work { width: 202px; } .d-off { width: 180px; }
.dgrid tr.filter td.funnel { background: var(--mid); border: 0; }
.funnel svg { width: 14px; height: 14px; }
.dgrid tr.group td { height: 18px; padding: 0 0 0 2px; background: #efefef; border-right: 0; }
.dgrid tr.group.sel td { height: 19px; background: #fff2cc; }
.dgrid tr.group td:first-child { border-bottom: 0; }
.fold { display: block; width: 9px; height: 9px; margin-left: 1px; background: linear-gradient(#333, #333) center / 5px 1px no-repeat #fff; }
.dgrid tr td.indent { background: #efefef; border: 0; border-right: 1px solid var(--line); }
.dgrid tr.sum td { background: #efefef; border: solid var(--line); border-width: 1px 0; }
.dgrid tr.sum td.indent { border-width: 0 1px 0 0; }
.dgrid tr.sum td.cell { padding-left: 4px; background: #d6d6d6; border-right: 1px solid #b3c7df; }
.dgrid .total { height: 17px; border-color: var(--line); }
.dgrid .total i { width: 15px; border-right: 1px solid var(--line); }
.dgrid .total span { width: 80px; }
.scroll { display: flex; flex-direction: column; width: 17px; background: #d6d6d6; }
.scroll button { height: 17px; background: var(--mid); }
.scroll button:last-child { margin-top: auto; }
.thumb { height: 52px; background: var(--mid); }
.tri { display: block; width: 0; margin: 0 auto; border: 4px solid transparent; border-top-color: #000; border-bottom: 0; }
.tri.up { border-top: 0; border-bottom: 4px solid #000; }

.dialog { position: absolute; border: 1px solid var(--deep); background: var(--pale); }
.dialog header { display: flex; align-items: center; height: 30px; padding: 0 4px 0 2px; }
.dialog h3 { flex: 1; font: 12px/20px var(--bar); }
.dialog header button { width: 14px; margin-left: 8px; color: #404040; font: 700 14px/14px var(--ui); }
.dialog header svg { width: 8px; height: 8px; margin: 0 auto; }
.options { left: 408px; top: 128px; width: 800px; }
.options > header { background: #9dbbdb; }
.options > footer { height: 23px; background: var(--mid); }
.dbody { padding: 6px 8px 6px 11px; }
.optrow { display: flex; padding-right: 1px; }
.opttabs { flex: none; width: 151px; }
.opttabs button { position: relative; display: block; width: 100%; height: 39px; padding-left: 10px; border: solid var(--line); border-width: 1px 0 0 1px; text-align: left; }
.opttabs button:last-child { height: 40px; border-bottom-width: 1px; }
.opttabs button.on { width: 152px; background: var(--sun); font-weight: 700; z-index: 1; }
.panel { flex: 1; display: flex; flex-direction: column; gap: 7px; padding: 10px 9px 9px; border: 1px solid var(--line); }
fieldset { min-width: 0; margin: 0; padding: 8px 16px 9px; border: 1px solid var(--line); }
legend { margin-left: -12px; padding: 0 4px 2px 3px; font-weight: 700; line-height: 12px; }
.g2 { padding-bottom: 6px; }
.line { display: flex; align-items: center; height: 21px; margin-bottom: 3px; }
.g3 .line { margin-bottom: 0; }
.line label { width: 94px; padding-top: 3px; }
.line label.wide { width: 214px; }
.line .eg { width: 41px; margin-left: 12px; padding-top: 3px; }
.line b { padding-top: 3px; font-size: 12px; }
.ch { width: 48px; height: 21px; padding: 0 3px; border: 1px solid var(--line); }
.std { width: 144px; }
.g1 .std { margin: 9px 0 0 -2px; }
.g2 .std { margin: 12px 0 0 -2px; }
.change { position: relative; }
.combo.neg { width: 72px; height: 21px; margin-left: -1px; }
.spin { position: relative; display: flex; width: 70px; height: 21px; padding: 0; border: 1px solid var(--line); background: #fff; }
.spin.off { background: #e5e5e5; }
.spin input { flex: 1; width: 0; height: 19px; padding: 1px 3px 0 0; border: 0; background: none; font-size: 12px; text-align: right; }
.spin input:disabled { color: #333; }
.spin.focus input { height: 13px; margin: 3px 3px 0 1px; padding: 0; background: #0078d7; color: #fff; line-height: 13px; }
.ud { display: flex; flex-direction: column; gap: 1px; width: 17px; }
.ud button { flex: 1; background: var(--mid); }
.tick { display: block; width: 0; margin: 0 auto; border: 2px solid transparent; border-top-color: #000; border-bottom: 0; }
.tick.up { border-top: 0; border-bottom: 2px solid #000; }
.actions { display: flex; justify-content: flex-end; gap: 7px; padding-top: 6px; }
.btn.ic { width: 80px; height: 25px; padding-left: 4px; gap: 10px; justify-content: flex-start; }
.btn.apply { width: 75px; height: 25px; margin-left: -1px; background: none; color: #888; }
.numbers { left: 773px; top: 217px; width: 600px; box-shadow: 1px 1px 4px rgb(0 0 0 / 35%); }
.numbers > header { background: var(--deep); color: #fff; }
.nbody { padding: 11px 8px 9px; }
.warn { display: flex; gap: 12px; margin: 12px 0 0 -2px; }
.warn svg { width: 30px; height: 28px; }
.warn p { line-height: 13px; }
.numbers fieldset { padding-right: 4px; }
.actions.split { padding-top: 10px; margin-right: -1px; }
.actions.split .std { height: 24px; margin-right: auto; margin-left: -1px; }
.actions.split .ic { width: 75px; gap: 8px; }

.mark { position: absolute; border: 2px solid #c00000; filter: drop-shadow(4px 4px 3px rgb(0 0 0 / 45%)); pointer-events: none; z-index: 2; }
.m1 { left: -7px; top: -5px; width: 136px; height: 42px; }
.m2 { left: -16px; top: -3px; width: 167px; height: 28px; }
.m3 { left: -17px; top: -1px; width: 96px; height: 26px; }
</style>
